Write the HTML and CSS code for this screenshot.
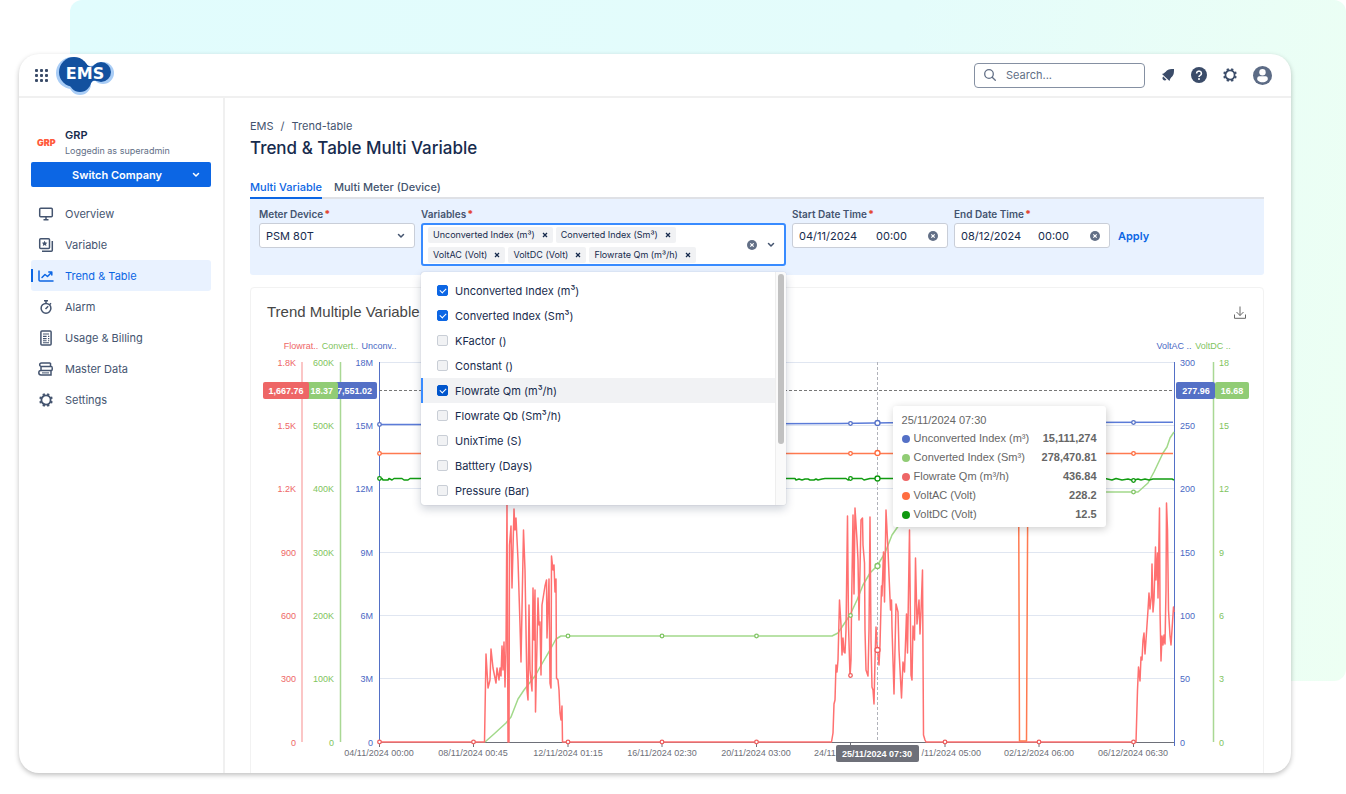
FILE: index.html
```html
<!DOCTYPE html>
<html lang="en">
  <head>
    <meta charset="UTF-8" />
    <title>Trend &amp; Table Multi Variable</title>
    <link rel="stylesheet" href="styles.css">
  </head>
  <body>
    <div class="backdrop"></div>

    <div class="window">
      <header class="topbar">
        <button class="icon-btn apps" aria-label="Apps">
          <svg width="13" height="13" viewBox="0 0 13 13" fill="currentColor">
            <rect x="0" y="0" width="3" height="3" rx="1" /><rect x="5" y="0" width="3" height="3" rx="1" /><rect x="10" y="0" width="3" height="3" rx="1" />
            <rect x="0" y="5" width="3" height="3" rx="1" /><rect x="5" y="5" width="3" height="3" rx="1" /><rect x="10" y="5" width="3" height="3" rx="1" />
            <rect x="0" y="10" width="3" height="3" rx="1" /><rect x="5" y="10" width="3" height="3" rx="1" /><rect x="10" y="10" width="3" height="3" rx="1" />
          </svg>
        </button>
        <a href="#" class="logo" aria-label="EMS home">
          <svg width="60" height="40" viewBox="0 0 60 40">
            <g fill="#a9cdf6">
              <circle cx="17" cy="18" r="16" /><circle cx="25" cy="29" r="11" /><circle cx="48" cy="18" r="11" />
              <path d="M28 6c5 6 8 6 13 3l1 17c-4-1-6 1-8 8z" />
            </g>
            <g fill="#13519f">
              <circle cx="19" cy="17" r="15" /><circle cx="25" cy="26" r="11" /><circle cx="46" cy="17" r="10" />
              <path d="M29 6c4 6 7 7 11 4l2 16c-5-1-5 0-8 6z" />
            </g>
            <text x="30" y="24" class="logo-text">EMS</text>
          </svg>
        </a>
        <label class="search">
          <svg width="12" height="12" viewBox="0 0 12 12" fill="none" stroke="#626f86" stroke-width="1.3" stroke-linecap="round">
            <circle cx="5" cy="5" r="4.3" /><path d="M8.2 8.2 11.3 11.3" />
          </svg>
          <input type="text" placeholder="Search..." aria-label="Search" />
        </label>
        <nav class="actions">
          <button class="icon-btn" aria-label="Notifications">
            <svg width="14" height="14" viewBox="0 0 14 14" fill="currentColor">
              <path d="M1 6C3.500 5.500 4.500 4 5.600 2.800 7.400 1 10 1 13 1c0 3 0 5.600-1.800 7.400C10 9.500 9 10.500 8.500 13z" />
              <path d="M2.200 8.500 5.500 11.800C4.600 12.700 3.100 12.800 2.200 11.800 1.200 10.900 1.300 9.400 2.200 8.500z" />
            </svg>
          </button>
          <button class="icon-btn" aria-label="Help">
            <svg width="16" height="16" viewBox="0 0 16 16">
              <circle cx="8" cy="8" r="8" fill="currentColor" />
              <path d="M5.600 6.400a2.400 2.300 0 1 1 3.600 2C8.300 8.900 8 9.200 8 10" fill="none" stroke="#fff" stroke-width="1.600" />
              <circle cx="8" cy="12" r="1" fill="#fff" />
            </svg>
          </button>
          <button class="icon-btn" aria-label="Settings">
            <svg width="14" height="14" viewBox="0 0 14 14"><use href="#gear" /></svg>
          </button>
          <button class="icon-btn" aria-label="Profile">
            <svg width="19" height="19" viewBox="0 0 19 19">
              <circle cx="9.500" cy="9.500" r="9.500" fill="#5c6b85" />
              <circle cx="9.500" cy="6.300" r="3.200" fill="#fff" />
              <path d="M4.300 14V12.300c0-1.300.9-2 2-2h6.400c1.100 0 2 .7 2 2V14c-1.400 1.600-3.200 2.300-5.200 2.300S5.700 15.600 4.300 14z" fill="#fff" />
            </svg>
          </button>
        </nav>
      </header>

      <div class="layout">
        <aside class="sidebar">
          <div class="company">
            <span class="company-logo">GRP</span>
            <div>
              <p class="company-name">GRP</p>
              <p class="company-role">Loggedin as superadmin</p>
            </div>
          </div>
          <button class="switch-btn">
            <span>Switch Company</span>
            <svg width="8" height="6" viewBox="0 0 8 6"><use href="#chevron" /></svg>
          </button>
          <nav class="menu">
            <a href="#">
              <svg width="16" height="16" viewBox="0 0 16 16" fill="none" stroke="currentColor" stroke-width="1.500">
                <rect x="1.700" y="2.200" width="12.600" height="8.600" rx="1" /><path d="M8 11v3M5.500 13.700h5" />
              </svg>
              Overview
            </a>
            <a href="#">
              <svg width="16" height="16" viewBox="0 0 16 16" fill="none" stroke="currentColor" stroke-width="1.500">
                <rect x="1.700" y="1.700" width="9.800" height="9.800" rx="1" /><path d="M14.300 4v9.300a1 1 0 0 1-1 1H4" />
                <path d="M6.600 3.800l.9 1.800 1.900.2-1.400 1.300.4 2-1.800-1-1.800 1 .4-2L3.800 5.800l1.900-.2z" fill="currentColor" stroke="none" />
              </svg>
              Variable
            </a>
            <a href="#" class="active">
              <svg width="16" height="16" viewBox="0 0 16 16" fill="none" stroke="currentColor" stroke-width="1.500" stroke-linecap="round" stroke-linejoin="round">
                <path d="M1 3v9a1 1 0 0 0 1 1h13M4 9.500 7 6.500l2.500 2L13.500 4.500M10.800 4h3v3" />
              </svg>
              Trend &amp; Table
            </a>
            <a href="#">
              <svg width="16" height="16" viewBox="0 0 16 16" fill="none" stroke="currentColor" stroke-width="1.500">
                <circle cx="8" cy="9.300" r="4.900" /><path d="M6 1.800h4M8 2v2.400M11.700 5.500l1.300-1.300M7.500 10l2.700-2.800" />
              </svg>
              Alarm
            </a>
            <a href="#">
              <svg width="16" height="16" viewBox="0 0 16 16" fill="none" stroke="currentColor" stroke-width="1.500">
                <rect x="2.900" y="1.100" width="10.200" height="13.800" rx="1" />
                <path d="M5 4h6M5 6.400h3.600M5 8.600h3.600M5 10.800h3.600M10 6.400h1.300M10 8.600h1.300M10 10.800h1.300M5 12.800h6" stroke-width="1.100" />
              </svg>
              Usage &amp; Billing
            </a>
            <a href="#">
              <svg width="16" height="16" viewBox="0 0 16 16" fill="none" stroke="currentColor" stroke-width="1.500">
                <path d="M12.500 1.900H3.500a1.800 1.800 0 0 0 0 3.600h9M12.500 1.900v3.600M3 5.600h10.500c1 0 1 3.900 0 3.900H3zM3 9.600a2.100 2.100 0 0 0 0 4.400h10V9.600" />
                <path d="M4 11.900h7" stroke-width="1" />
              </svg>
              Master Data
            </a>
            <a href="#">
              <svg width="16" height="16" viewBox="-1 -1 16 16"><use href="#gear" width="14" height="14" /></svg>
              Settings
            </a>
          </nav>
        </aside>

        <main class="content">
          <p class="breadcrumb"><a href="#">EMS</a><span>/</span><a href="#">Trend-table</a></p>
          <h1>Trend &amp; Table Multi Variable</h1>

          <div class="tabs" role="tablist">
            <button role="tab" class="tab selected" aria-selected="true">Multi Variable</button>
            <button role="tab" class="tab">Multi Meter (Device)</button>
          </div>

          <form class="filters">
            <div class="field">
              <label for="meter">Meter Device<b>*</b></label>
              <div class="box">
                <select id="meter"><option>PSM 80T</option></select>
                <svg class="arrow" width="8" height="6" viewBox="0 0 8 6"><use href="#chevron" /></svg>
              </div>
            </div>

            <div class="field wide">
              <label for="variables">Variables<b>*</b></label>
              <div class="multi">
                <div class="tags">
                  <span class="tag">Unconverted Index (m³)<button type="button" aria-label="Remove"><svg width="6" height="6" viewBox="0 0 6 6"><use href="#cross" /></svg></button></span>
                  <span class="tag">Converted Index (Sm³)<button type="button" aria-label="Remove"><svg width="6" height="6" viewBox="0 0 6 6"><use href="#cross" /></svg></button></span>
                  <span class="tag">VoltAC (Volt)<button type="button" aria-label="Remove"><svg width="6" height="6" viewBox="0 0 6 6"><use href="#cross" /></svg></button></span>
                  <span class="tag">VoltDC (Volt)<button type="button" aria-label="Remove"><svg width="6" height="6" viewBox="0 0 6 6"><use href="#cross" /></svg></button></span>
                  <span class="tag">Flowrate Qm (m³/h)<button type="button" aria-label="Remove"><svg width="6" height="6" viewBox="0 0 6 6"><use href="#cross" /></svg></button></span>
                  <input type="text" id="variables" class="multi-input" role="combobox" aria-expanded="true" />
                </div>
                <button type="button" class="icon-btn clear" aria-label="Clear"><svg width="10" height="10" viewBox="0 0 10 10"><use href="#clear" /></svg></button>
                <svg width="8" height="6" viewBox="0 0 8 6"><use href="#chevron" /></svg>
              </div>

              <div class="dropdown">
                <div class="options">
                  <label class="option"><input type="checkbox" checked />Unconverted Index (m³)</label>
                  <label class="option"><input type="checkbox" checked />Converted Index (Sm³)</label>
                  <label class="option"><input type="checkbox" />KFactor ()</label>
                  <label class="option"><input type="checkbox" />Constant ()</label>
                  <label class="option focused"><input type="checkbox" checked />Flowrate Qm (m³/h)</label>
                  <label class="option"><input type="checkbox" />Flowrate Qb (Sm³/h)</label>
                  <label class="option"><input type="checkbox" />UnixTime (S)</label>
                  <label class="option"><input type="checkbox" />Batttery (Days)</label>
                  <label class="option"><input type="checkbox" />Pressure (Bar)</label>
                </div>
                <div class="scrollbar"><div class="thumb"></div></div>
              </div>
            </div>

            <div class="field">
              <label for="startDate">Start Date Time<b>*</b></label>
              <div class="box">
                <input type="text" id="startDate" class="date" value="04/11/2024" />
                <input type="text" class="time" value="00:00" aria-label="Start time" />
                <button type="button" class="icon-btn clear" aria-label="Clear"><svg width="10" height="10" viewBox="0 0 10 10"><use href="#clear" /></svg></button>
              </div>
            </div>

            <div class="field">
              <label for="endDate">End Date Time<b>*</b></label>
              <div class="box">
                <input type="text" id="endDate" class="date" value="08/12/2024" />
                <input type="text" class="time" value="00:00" aria-label="End time" />
                <button type="button" class="icon-btn clear" aria-label="Clear"><svg width="10" height="10" viewBox="0 0 10 10"><use href="#clear" /></svg></button>
              </div>
            </div>

            <button type="submit" class="apply">Apply</button>
          </form>

          <section class="card">
            <div class="card-head">
              <h2>Trend Multiple Variable</h2>
              <button class="icon-btn" aria-label="Download">
                <svg width="12" height="13" viewBox="0 0 12 13" fill="none" stroke="#666" stroke-width="1">
                  <path d="M.5 8.500v3.800h11V8.500M6 .5v9M2.500 6 6 9.500 9.500 6" />
                </svg>
              </button>
            </div>

            <div class="chart">
              <svg class="plot" viewBox="251 330 1012 443">
                <!-- horizontal grid -->
                <path class="grid" d="M379 362.500H1174M379 425.500H1174M379 488.500H1174M379 552.500H1174M379 615.500H1174M379 678.500H1174" />
                <path d="M379 742.500H1174" stroke="#6e7079" />
                <path d="M379.500 742v5M473.500 742v5M568 742v5M662 742v5M756.500 742v5M850.500 742v5M945 742v5M1039 742v5M1133.500 742v5" stroke="#6e7079" />

                <!-- value axes -->
                <path d="M302 362V742" stroke="#fbc6c6" stroke-width="2" />
                <path d="M340.500 362V742" stroke="#a9d894" stroke-width="1.500" />
                <path d="M379.500 362V742" stroke="#5470c6" />
                <path d="M1174.500 362V746" stroke="#5470c6" />
                <path d="M1213.500 362V742" stroke="#a9d894" stroke-width="1.500" />

                <g class="red end">
                  <text x="296" y="366">1.8K</text><text x="296" y="429">1.5K</text><text x="296" y="492">1.2K</text>
                  <text x="296" y="556">900</text><text x="296" y="619">600</text><text x="296" y="682">300</text><text x="296" y="746">0</text>
                </g>
                <g class="green end">
                  <text x="334" y="366">600K</text><text x="334" y="429">500K</text><text x="334" y="492">400K</text>
                  <text x="334" y="556">300K</text><text x="334" y="619">200K</text><text x="334" y="682">100K</text><text x="334" y="746">0</text>
                </g>
                <g class="blue end">
                  <text x="373" y="366">18M</text><text x="373" y="429">15M</text><text x="373" y="492">12M</text>
                  <text x="373" y="556">9M</text><text x="373" y="619">6M</text><text x="373" y="682">3M</text><text x="373" y="746">0</text>
                </g>
                <g class="blue">
                  <text x="1180" y="366">300</text><text x="1180" y="429">250</text><text x="1180" y="492">200</text>
                  <text x="1180" y="556">150</text><text x="1180" y="619">100</text><text x="1180" y="682">50</text><text x="1180" y="746">0</text>
                </g>
                <g class="green">
                  <text x="1219" y="366">18</text><text x="1219" y="429">15</text><text x="1219" y="492">12</text>
                  <text x="1219" y="556">9</text><text x="1219" y="619">6</text><text x="1219" y="682">3</text><text x="1219" y="746">0</text>
                </g>
                <g class="middle">
                  <text x="301" y="349" class="red">Flowrat..</text>
                  <text x="340" y="349" class="green">Convert..</text>
                  <text x="379" y="349" class="blue">Unconv..</text>
                  <text x="1174" y="349" class="blue">VoltAC ..</text>
                  <text x="1213" y="349" class="green">VoltDC ..</text>
                </g>
                <g class="middle gray">
                  <text x="379" y="756">04/11/2024 00:00</text>
                  <text x="473" y="756">08/11/2024 00:45</text>
                  <text x="568" y="756">12/11/2024 01:15</text>
                  <text x="662" y="756">16/11/2024 02:30</text>
                  <text x="756" y="756">20/11/2024 03:00</text>
                  <text x="1039" y="756">02/12/2024 06:00</text>
                  <text x="1133" y="756">06/12/2024 06:30</text>
                </g>
                <g class="gray">
                  <text x="814" y="756">24/11</text>
                  <text x="981" y="756" class="end">/11/2024 05:00</text>
                </g>

                <!-- unconverted index -->
                <path class="line" stroke="#5b7bd8" d="M379 424.500 600 424.500 840 423.500 890 422.800 1173 422.200" />
                <!-- converted index -->
                <path class="line" stroke="#a2d98a" d="M485 742 494 734 506 723 511 717 518 699 524 690 535 676 543 662 550 650 556 639 561 636H832L838 633 850 615 857 600 863 585 870 573 877 566 885 553 892 535 899 525 910 510 925 499 945 494 1000 492H1138L1148 483 1154 472 1163 453 1167 447 1170 438 1174 432" />
                <!-- flowrate -->
                <path class="line" stroke="#ff7070" d="M379 742H484.500L486 654 488 688 490 680 491 649 493 668 496 683 497 668 499 680 500 668 501 676 502 646 503 670 504 642 505 687 506 650 507 500 508 742H509L509.500 545 511 526 512 588 514 509 515 530 516 518 518 560 520 625 521 662 523.500 530 525 570 526 630 527 690 528 700 529 605 530 670 532 691 533 588 534 640 535 590 535.500 712 538 598 539 625 540 622 541 675 542 605 545 586 546.500 580 547 638 549 579 550 683 551 688 551.500 556 553 570 554 565 555 592 556 579 556.500 678 558 680 559 690 560 713 561 720 562 706 562.500 742H831.500L833 733 834 704 835 700 836 665 837 672 838 660 839.500 600 841 625 842 655 843 638 844 652 845 653 846 630 847.500 516 848.500 625 850 677 851 660 851.500 610 853 515 854 594 855 508 857 540 858 560 859 620 861 520 862.500 518 863 545 864.500 563 865 630 866 670 868 676 869 630 870 517 871 640 872 687 873 690 874 704 875 660 876 627 877.500 650 879 665 880 645 881.500 586 882 596 883.500 552 884.500 602 886 510 888 550 889 575 890.500 610 891.500 600 892 628 894 694 896 604 898 612 899 650 901.500 698 903 662 904.500 672 906.500 614 907.500 653 909.500 530 911 675 912 680 913 626 914.500 640 915.500 558 917 624 919 600 920 634 921 612 922.500 570 923.500 735 925 740 926 742H1136L1137.500 690 1138.500 667 1140 681 1141 657 1142 660 1143 640 1144 633 1145 654 1146 640 1148 610 1149 593 1150 609 1151.500 595 1152 564 1153 612 1154 600 1155.500 547 1156 580 1157.500 553 1158 598 1159.500 508 1160 610 1161 661 1162 636 1163 645 1164 635 1165 644 1166 590 1166.500 503 1167.500 530 1168.500 610 1170 636 1171 645 1172 630 1173.500 607 1174 612" />
                <!-- volt ac -->
                <path class="line" stroke="#ff7a50" d="M379 453.500H1018.500L1019.500 741H1026.500L1028 453.500H1173" />
                <!-- volt dc -->
                <path class="line" stroke="#119c11" d="M379 478.500H382L383 480H388L389 478.500 392 480 394 478.500H402L404 480H408L410 478.500H795L796 480 799 479 802 480 805 479H808L810 480 814 480 816 479 818 480 822 479 825 478.500H846L848 480 851 478.500H862L864 480 868 479 870 478.500H1105L1112 480 1116 478.500 1122 480 1128 479 1133 480.500 1138 479 1141 480 1145 479 1149 480 1153 479H1172L1174 480" />

                <path class="pointer" d="M379 390.500H1174" stroke="#777" />
                <path class="pointer" d="M877.500 362V742" stroke="#b0b2ba" />

                <g fill="#fff" stroke-width="1.300">
                  <g stroke="#5470c6"><circle cx="379.500" cy="424.500" r="1.800" /><circle cx="850.500" cy="423.500" r="1.800" /><circle cx="877.500" cy="423" r="2.500" /><circle cx="1133.500" cy="422.500" r="1.800" /></g>
                  <g stroke="#ff6a3c"><circle cx="379.500" cy="453.500" r="1.800" /><circle cx="850.500" cy="453.500" r="1.800" /><circle cx="877.500" cy="453" r="2.500" /><circle cx="1133.500" cy="453.500" r="1.800" /></g>
                  <g stroke="#0a960a"><circle cx="379.500" cy="478.500" r="1.800" /><circle cx="850.500" cy="478.500" r="1.800" /><circle cx="877.500" cy="478.500" r="2.500" /><circle cx="1133.500" cy="480.500" r="1.800" /></g>
                  <g stroke="#82c566"><circle cx="568" cy="636" r="1.800" /><circle cx="662" cy="636" r="1.800" /><circle cx="756.500" cy="636" r="1.800" /><circle cx="850.500" cy="615.500" r="1.800" /><circle cx="877.500" cy="566" r="2.500" /><circle cx="1133.500" cy="492" r="1.800" /></g>
                  <g stroke="#ee5f5f"><circle cx="379.500" cy="742" r="1.800" /><circle cx="473.500" cy="742" r="1.800" /><circle cx="568" cy="742" r="1.800" /><circle cx="662" cy="742" r="1.800" /><circle cx="756.500" cy="742" r="1.800" /><circle cx="850.500" cy="675.500" r="1.800" /><circle cx="877.500" cy="650" r="2.500" /><circle cx="945" cy="742" r="1.800" /><circle cx="1039" cy="742" r="1.800" /><circle cx="1133.500" cy="742" r="1.800" /></g>
                </g>

                <!-- axis pointer labels -->
                <g class="badge">
                  <rect x="330" y="382" width="47" height="17" rx="2" fill="#5470c6" />
                  <text x="372" y="394" class="end">7,551.02</text>
                  <rect x="300" y="382" width="38" height="17" rx="2" fill="#91cc75" />
                  <text x="333" y="394" class="end">18.37</text>
                  <rect x="263" y="382" width="46" height="17" rx="2" fill="#ee6666" />
                  <text x="286" y="394" class="middle">1,667.76</text>
                  <rect x="1176" y="382" width="39" height="17" rx="2" fill="#5470c6" />
                  <text x="1196" y="394" class="middle">277.96</text>
                  <rect x="1215" y="382" width="34" height="17" rx="2" fill="#91cc75" />
                  <text x="1232" y="394" class="middle">16.68</text>
                  <rect x="836" y="745" width="83" height="17" rx="2" fill="#6e7079" />
                  <text x="877" y="757" class="middle">25/11/2024 07:30</text>
                </g>
              </svg>

              <div class="tooltip">
                <p>25/11/2024 07:30</p>
                <ul>
                  <li><i class="dot dot-blue"></i>Unconverted Index (m³)<b>15,111,274</b></li>
                  <li><i class="dot dot-green"></i>Converted Index (Sm³)<b>278,470.81</b></li>
                  <li><i class="dot dot-red"></i>Flowrate Qm (m³/h)<b>436.84</b></li>
                  <li><i class="dot dot-orange"></i>VoltAC (Volt)<b>228.2</b></li>
                  <li><i class="dot dot-dark"></i>VoltDC (Volt)<b>12.5</b></li>
                </ul>
              </div>
            </div>
          </section>
        </main>
      </div>
    </div>

    <!-- shared icons -->
    <svg class="sprite" aria-hidden="true">
      <symbol id="chevron" viewBox="0 0 8 6"><path d="M1.500 1.500 4 4l2.500-2.500" fill="none" stroke="currentColor" stroke-width="1.500" stroke-linecap="round" stroke-linejoin="round" /></symbol>
      <symbol id="cross" viewBox="0 0 6 6"><path d="M1 1l4 4M5 1 1 5" stroke="currentColor" stroke-width="1.300" /></symbol>
      <symbol id="clear" viewBox="0 0 10 10"><circle cx="5" cy="5" r="5" fill="currentColor" /><path d="M3.300 3.300l3.400 3.400M6.700 3.300 3.300 6.700" stroke="#fff" stroke-width="1.200" /></symbol>
      <symbol id="gear" viewBox="0 0 14 14">
        <circle cx="7" cy="7" r="4.600" fill="none" stroke="currentColor" stroke-width="1.800" />
        <path d="M4.500.6 5.100 2.600M9.500.6 8.900 2.600M13.400 4.500 11.400 5.100M13.400 9.500 11.400 8.900M9.500 13.400 8.900 11.400M4.500 13.400 5.100 11.400M.6 9.500 2.600 8.900M.6 4.500 2.600 5.100" stroke="currentColor" stroke-width="2.300" />
      </symbol>
    </svg>
  </body>
</html>
```
FILE: styles.css
```css
* {
  margin: 0;
  padding: 0;
  box-sizing: border-box;
}

body {
  height: 100vh;
  padding: 54px 55px 21px 19px;
  overflow: hidden;
  background: #fff;
  color: #44546f;
  font-family: Inter, "Liberation Sans", sans-serif;
  font-size: 11px;
  line-height: 16px;
}

a {
  color: inherit;
  text-decoration: none;
}

button {
  border: none;
  background: none;
  color: inherit;
  font: inherit;
  cursor: pointer;
}

svg {
  display: block;
  flex-shrink: 0;
}

.sprite {
  position: absolute;
  width: 0;
  height: 0;
}

.backdrop {
  position: absolute;
  top: 0;
  right: 0;
  left: 70px;
  height: 681px;
  border-radius: 12px 12px 12px 0;
  background: linear-gradient(100deg, #e1fcfd 0%, #e4fcfb 60%, #edfff3 100%);
}

.window {
  position: relative;
  display: flex;
  flex-direction: column;
  height: 100%;
  overflow: hidden;
  border-radius: 20px;
  background: #fff;
  box-shadow: 0 2px 5px rgba(0, 0, 0, 0.25);
}

/* top bar */
.topbar {
  display: flex;
  align-items: center;
  height: 44px;
  flex-shrink: 0;
  padding: 0 19px 0 16px;
  border-bottom: 2px solid #f0f0f0;
}

.icon-btn {
  display: flex;
  align-items: center;
  justify-content: center;
  color: #3b4c69;
}

.logo {
  margin-left: 7px;
}

.logo-text {
  fill: #fff;
  font-family: "DejaVu Sans", sans-serif;
  font-size: 16px;
  font-weight: 700;
  text-anchor: middle;
}

.search {
  display: flex;
  align-items: center;
  gap: 10px;
  width: 171px;
  height: 25px;
  margin-left: auto;
  padding: 0 9px;
  border: 1px solid #8590a2;
  border-radius: 4px;
}

.search input {
  width: 100%;
  border: none;
  outline: none;
  background: none;
  font: inherit;
}

.search input::placeholder {
  color: #626f86;
}

.actions {
  display: flex;
  align-items: center;
  gap: 16px;
  margin-left: 16px;
}

/* side bar */
.layout {
  display: flex;
  flex: 1;
  min-height: 0;
}

.sidebar {
  width: 206px;
  flex-shrink: 0;
  padding: 29px 12px 0;
  border-right: 2px solid #f0f0f0;
}

.company {
  display: flex;
  align-items: center;
  gap: 10px;
  padding-left: 6px;
}

.company-logo {
  width: 18px;
  color: #ff5a3c;
  font-size: 9px;
  font-weight: 900;
}

.company-name {
  color: #172b4d;
  font-weight: 600;
}

.company-role {
  color: #626f86;
  font-size: 9px;
  line-height: 15px;
}

.switch-btn {
  display: flex;
  align-items: center;
  width: 100%;
  height: 25px;
  margin-top: 4px;
  padding: 0 11px;
  border-radius: 2px;
  background: #0c66e4;
  color: #fff;
  font-weight: 600;
}

.switch-btn span {
  flex: 1;
}

.menu {
  margin-top: 11px;
}

.menu a {
  position: relative;
  display: flex;
  align-items: center;
  gap: 11px;
  height: 31px;
  padding-left: 7px;
  border-radius: 3px;
}

.menu .active {
  background: #e9f2ff;
  color: #0c66e4;
}

.menu .active::before {
  content: "";
  position: absolute;
  left: 0;
  width: 2px;
  height: 13px;
  background: #0c66e4;
}

/* content */
.content {
  display: flex;
  flex: 1;
  flex-direction: column;
  min-width: 0;
  padding: 20px 27px 0 25px;
}

.breadcrumb {
  display: flex;
  gap: 7px;
}

h1 {
  margin-top: 2px;
  color: #172b4d;
  font-size: 17px;
  font-weight: 500;
  line-height: 24px;
}

.tabs {
  display: flex;
  gap: 12px;
  margin-top: 18px;
  border-bottom: 2px solid #dfe1e6;
}

.tab {
  height: 19px;
  padding-bottom: 1px;
  font-weight: 500;
}

.tab.selected {
  height: 21px;
  margin-bottom: -2px;
  border-bottom: 2px solid #0c66e4;
  color: #0c66e4;
}

.filters {
  display: flex;
  align-items: flex-start;
  gap: 6px;
  height: 76px;
  flex-shrink: 0;
  padding: 7px 9px;
  border-radius: 0 0 3px 3px;
  background: #e9f2ff;
}

.field {
  position: relative;
  width: 156px;
}

.field.wide {
  width: 365px;
}

.field > label {
  display: block;
  height: 17px;
  font-size: 10px;
  font-weight: 600;
}

.field > label b {
  margin-left: 1px;
  color: #e34935;
}

.box {
  display: flex;
  align-items: center;
  height: 25px;
  padding: 0 9px 0 6px;
  border: 1px solid #c9ced8;
  border-radius: 3px;
  background: #fff;
}

.box select,
.box input {
  border: none;
  outline: none;
  background: none;
  color: #172b4d;
  font: inherit;
}

.box select {
  flex: 1;
  appearance: none;
}

.box .date {
  width: 77px;
}

.box .time {
  flex: 1;
  min-width: 0;
}

.clear {
  color: #626f86;
}

.multi {
  display: flex;
  align-items: center;
  min-height: 43px;
  padding: 0 9px 0 5px;
  border: 2px solid #388bff;
  border-radius: 3px;
  background: #fff;
}

.tags {
  display: flex;
  flex: 1;
  flex-wrap: wrap;
  gap: 4px 3px;
}

.tag {
  display: flex;
  align-items: center;
  gap: 7px;
  height: 16px;
  padding: 0 5px;
  border-radius: 2px;
  background: #f1f2f4;
  color: #172b4d;
  font-size: 9px;
}

.multi-input {
  width: 2px;
  border: none;
  outline: none;
}

.multi .clear {
  margin: 0 10px;
}

.apply {
  margin: 22px 0 0 2px;
  color: #0c66e4;
  font-weight: 600;
}

.dropdown {
  position: absolute;
  top: 66px;
  left: 0;
  z-index: 2;
  display: flex;
  width: 100%;
  height: 233px;
  overflow: hidden;
  border-radius: 3px;
  background: #fff;
  box-shadow: 0 0 1px rgba(9, 30, 66, 0.3), 0 4px 10px rgba(9, 30, 66, 0.2);
}

.options {
  flex: 1;
  padding-top: 6px;
}

.option {
  display: flex;
  align-items: center;
  gap: 7px;
  height: 25px;
  padding-left: 14px;
  border-left: 2px solid transparent;
  color: #172b4d;
}

.option.focused {
  border-left-color: #388bff;
  background: #f1f2f4;
}

.option input {
  position: relative;
  width: 11px;
  height: 11px;
  appearance: none;
  border: 1px solid #c9ced6;
  border-radius: 2px;
  background: #f1f2f4;
}

.option input:checked {
  border-color: #0c66e4;
  background: #0c66e4;
}

.option.focused input:checked {
  border-color: #0055cc;
  background: #0055cc;
}

.option input:checked::before {
  content: "";
  position: absolute;
  top: 2px;
  left: 2px;
  width: 5px;
  height: 3px;
  border: solid #fff;
  border-width: 0 0 1px 1px;
  transform: rotate(-45deg);
}

.scrollbar {
  width: 11px;
  padding: 2px;
  border-left: 1px solid #eee;
  background: #fafafa;
}

.thumb {
  height: 170px;
  border-radius: 4px;
  background: #c1c1c1;
}

/* chart */
.card {
  flex-shrink: 0;
  margin-top: 12px;
  padding-bottom: 8px;
  border: 1px solid #f2f2f2;
  border-radius: 4px;
}

.card-head {
  display: flex;
  align-items: center;
  justify-content: space-between;
  height: 42px;
  padding: 6px 17px 0 16px;
}

h2 {
  color: #464646;
  font-family: "Liberation Sans", Arial, sans-serif;
  font-size: 15px;
  font-weight: 400;
}

.chart {
  position: relative;
  font-family: "Liberation Sans", Arial, sans-serif;
}

.plot {
  width: 100%;
  height: auto;
  font-size: 9px;
}

.grid {
  stroke: #e0e6f1;
}

.line {
  fill: none;
  stroke-width: 1.5;
  stroke-linejoin: round;
}

.pointer {
  stroke-dasharray: 3 2;
}

.red {
  fill: #ee6666;
}

.green {
  fill: #7fc460;
}

.blue {
  fill: #4a68c4;
}

.gray {
  fill: #6e7079;
}

.end {
  text-anchor: end;
}

.middle {
  text-anchor: middle;
}

.badge text {
  fill: #fff;
  font-weight: 700;
}

.tooltip {
  position: absolute;
  top: 76px;
  left: 63.4%;
  width: 213px;
  padding: 5px 9px 3px;
  border-radius: 3px;
  background: #fff;
  box-shadow: 1px 2px 8px rgba(0, 0, 0, 0.2);
  color: #666;
}

.tooltip p {
  line-height: 18px;
}

.tooltip ul {
  list-style: none;
}

.tooltip li {
  display: flex;
  align-items: center;
  line-height: 19px;
}

.tooltip b {
  margin-left: auto;
}

.dot {
  width: 8px;
  height: 8px;
  margin-right: 4px;
  border-radius: 50%;
}

.dot-blue {
  background: #5470c6;
}

.dot-green {
  background: #91cc75;
}

.dot-red {
  background: #ee6666;
}

.dot-orange {
  background: #ff6e41;
}

.dot-dark {
  background: #0f990f;
}
```
